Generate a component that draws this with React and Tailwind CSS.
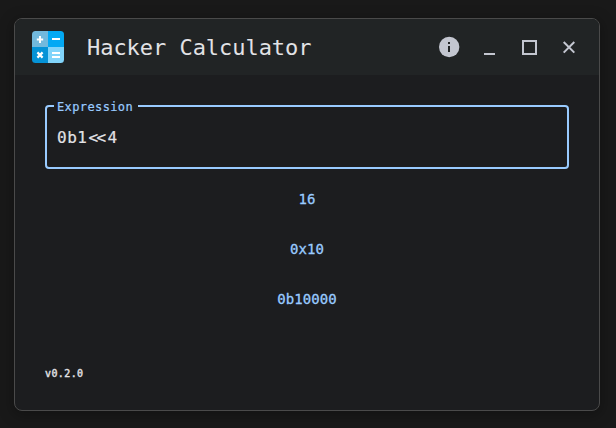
const results = ['16', '0x10', '0b10000'];

function Logo() {
  return (
    <svg className="h-8 w-8 shrink-0" viewBox="0 0 32 32">
      <defs>
        <clipPath id="logo-shape">
          <rect width="32" height="32" rx="3.5" />
        </clipPath>
      </defs>
      <g clipPath="url(#logo-shape)">
        <path fill="#72b9dd" d="M0 0h16v16H0z" />
        <path fill="#03a9f4" d="M16 0h16v16H16z" />
        <path fill="#0593d7" d="M0 16h16v16H0z" />
        <path fill="#81d4fa" d="M16 16h16v16H16z" />
      </g>
      <path fill="#fff" d="M7 5h2v2.500h2.200v2H9V12H7V9.500H4.800v-2H7z" />
      <path fill="#fff" d="M20 7h8v2h-8zM20 21h8v2h-8zM20 25h8v2h-8z" />
      <path stroke="#fff" strokeWidth="2.200" d="M5.400 21.400l5.200 5.200M10.600 21.400l-5.200 5.200" />
    </svg>
  );
}

export default function App() {
  return (
    <div className="h-[428px] w-[616px] bg-[#191919] pl-[14px] pt-[18px] font-['DejaVu_Sans_Mono','Liberation_Mono',monospace]">
      <div className="flex h-[393px] w-[586px] flex-col overflow-hidden rounded-lg border border-[#4a4a4a] bg-[#1c1d1f] shadow-[0_3px_14px_2px_rgba(0,0,0,0.25)]">
        <header className="flex h-14 shrink-0 items-center bg-[#212425] pl-[17px] pr-[24px]">
          <Logo />
          <h1 className="ml-[23px] flex-1 whitespace-nowrap pt-[2px] text-[22px] leading-7 tracking-[-0.04px] text-[#e2e2e5]">
            Hacker Calculator
          </h1>
          <svg className="h-10 w-[140px]" viewBox="435 27 140 40" fill="#c3c6d0">
            <circle cx="449.200" cy="47" r="10.200" />
            <path fill="#212425" d="M448 42h2v2h-2zM448 46h2v6h-2z" />
            <path d="M484 53h11v2h-11z" />
            <path fillRule="evenodd" d="M522 40h15v15h-15zM524 42v11h11V42z" />
            <path fill="none" stroke="#c3c6d0" strokeWidth="2" d="M563.700 42l10.600 10.600M574.300 42l-10.600 10.600" />
          </svg>
        </header>
        <main className="flex flex-1 flex-col px-[30px] pt-[23px]">
          <fieldset className="h-[71px] shrink-0 rounded border-2 border-[#99cbff] pl-[10px]">
            <legend className="-ml-[3px] h-4 pl-[3px] pr-[5px] text-[12px] leading-[18px] tracking-[0.38px] text-[#99cbff] [-webkit-text-stroke:0.2px_#99cbff]">
              Expression
            </legend>
            <div className="mt-[12px] flex h-6 whitespace-pre text-[16px] leading-6 tracking-[0.5px] text-[#e2e2e5] [-webkit-text-stroke:0.2px_#e2e2e5]">
              <span>0b1</span>
              <span className="ml-[1px] w-[19px] tracking-[-1.600px]">&lt;&lt;</span>
              <span>4</span>
            </div>
          </fieldset>
          <div className="flex flex-col text-center text-[14px] text-[#99cbff] [-webkit-text-stroke:0.3px_#99cbff]">
            {results.map((value) => (
              <output key={value} className="h-[50px] leading-[60px] tracking-[0.1px]">
                {value}
              </output>
            ))}
          </div>
          <footer className="mt-[47px] text-[10px] leading-4 tracking-[0.4px] text-[#e2e2e5] [-webkit-text-stroke:0.4px_#e2e2e5]">v0.2.0</footer>
        </main>
      </div>
    </div>
  );
}
